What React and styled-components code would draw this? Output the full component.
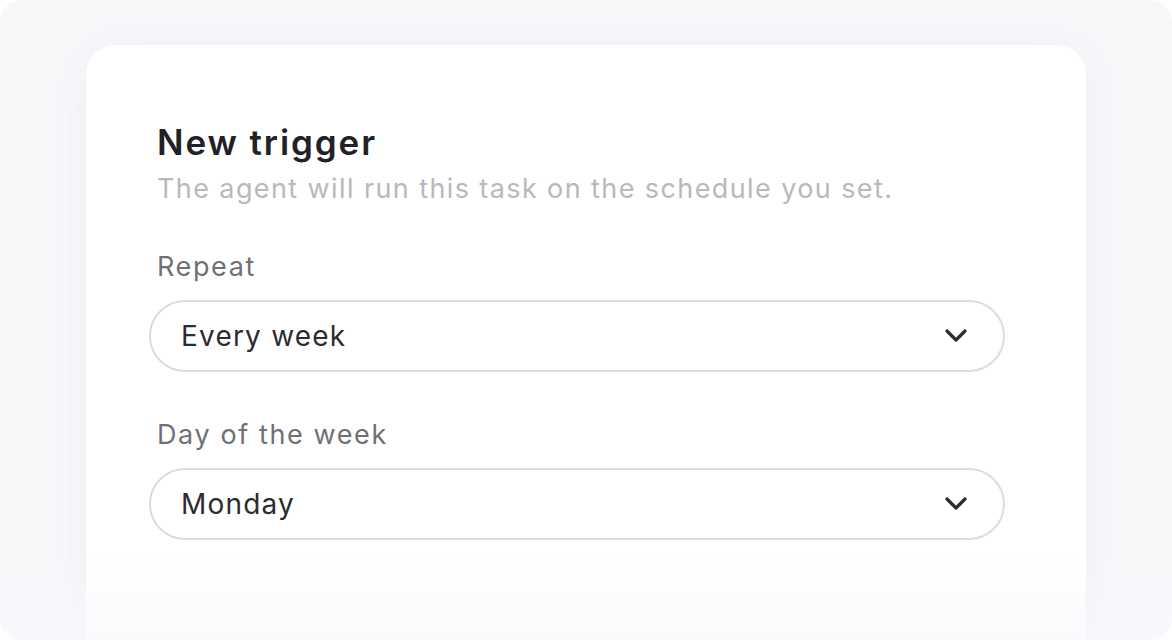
import React from 'react';
import styled, { createGlobalStyle } from 'styled-components';

const Global = createGlobalStyle`
  html, body {
    margin: 0;
    padding: 0;
    background: #ffffff;
  }
  * {
    box-sizing: border-box;
  }
`;

const Frame = styled.div`
  position: relative;
  width: 1172px;
  height: 640px;
  border-radius: 22px;
  overflow: hidden;
  background: #f8f7fa;
  padding: 45px 0 0 86px;
  font-family: Inter, "Noto Sans", sans-serif;
`;

const Card = styled.div`
  width: 1000px;
  min-height: 640px;
  background: #ffffff;
  border-radius: 30px 30px 0 0;
  box-shadow: 0 6px 40px rgba(120, 110, 150, 0.07);
  padding: 76px 81px 0 63px;
`;

const Fade = styled.div`
  position: absolute;
  left: 0;
  right: 0;
  bottom: 0;
  height: 90px;
  background: linear-gradient(to bottom, rgba(249, 248, 252, 0), rgba(249, 248, 252, 0.75));
  pointer-events: none;
`;

const Title = styled.h1`
  margin: 0;
  padding-left: 8px;
  font-size: 35px;
  line-height: 42px;
  font-weight: 600;
  color: #222226;
  letter-spacing: 1.9px;
`;

const Subtitle = styled.p`
  margin: 9px 0 0;
  padding-left: 8px;
  font-size: 27px;
  line-height: 34px;
  color: #b9b8bd;
  letter-spacing: 1.4px;
`;

const Field = styled.div`
  margin-top: ${props => props.first ? '44px' : '46px'};
  display: flex;
  flex-direction: column;
  gap: 16px;
`;

const Label = styled.label`
  padding-left: 8px;
  font-size: 27px;
  line-height: 34px;
  color: #717075;
  letter-spacing: 1.6px;
`;

const Select = styled.div`
  height: 72px;
  border: 2px solid #dcdbde;
  border-radius: 36px;
  padding: 0 35px 0 30px;
  display: flex;
  align-items: center;
  justify-content: space-between;
  font-size: 28px;
  letter-spacing: 1.2px;
  color: #2c2c30;
`;

const Chevron = () => (
  <svg width="24" height="16" viewBox="0 0 24 16" fill="none">
    <polyline points="3,3 12,12 21,3" stroke="#2c2c30" strokeWidth="3.2" strokeLinecap="round" strokeLinejoin="round" />
  </svg>
);

const fields = [
  { label: 'Repeat', value: 'Every week' },
  { label: 'Day of the week', value: 'Monday' },
];

const App = () => (
  <>
    <Global />
    <Frame>
      <Card>
        <Title>New trigger</Title>
        <Subtitle>The agent will run this task on the schedule you set.</Subtitle>
        {fields.map((f, i) => (
          <Field key={f.label} first={i === 0}>
            <Label>{f.label}</Label>
            <Select>
              <span>{f.value}</span>
              <Chevron />
            </Select>
          </Field>
        ))}
      </Card>
      <Fade />
    </Frame>
  </>
);

export default App;
